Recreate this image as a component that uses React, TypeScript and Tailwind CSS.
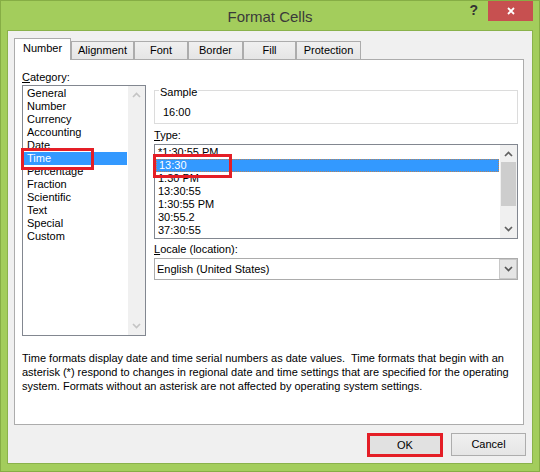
import clsx from "clsx";

const categories = [
  "General",
  "Number",
  "Currency",
  "Accounting",
  "Date",
  "Time",
  "Percentage",
  "Fraction",
  "Scientific",
  "Text",
  "Special",
  "Custom",
];

const types = ["*1:30:55 PM", "13:30", "1:30 PM", "13:30:55", "1:30:55 PM", "30:55.2", "37:30:55"];

const tabs = [
  { name: "Number", w: "w-[57px]", active: true },
  { name: "Alignment", w: "w-[63px]" },
  { name: "Font", w: "w-[54px]" },
  { name: "Border", w: "w-[55px]" },
  { name: "Fill", w: "w-[53px]" },
  { name: "Protection", w: "w-[65px]" },
];

const Chevron = ({ up, color }: { up?: boolean; color: string }) => (
  <svg width="9" height="6" viewBox="0 0 9 6">
    <polyline
      points={up ? "1,5 4.5,1.5 8,5" : "1,1 4.5,4.5 8,1"}
      fill="none"
      stroke={color}
      strokeWidth="1.7"
    />
  </svg>
);

export default function App() {
  return (
    <div className="relative w-[540px] h-[472px] border border-[#86ad45] bg-[#a3cd5c] flex flex-col px-[6px] font-['Liberation_Sans',Arial,sans-serif] text-[11px] leading-[13px] text-black">
      {/* title bar */}
      <div className="h-[29px] grid grid-cols-[1fr_auto_1fr]">
        <div />
        <div className="self-center pt-[1px] text-[15px] text-[#3a3a3a]">Format Cells</div>
        <div className="flex justify-end items-start">
          <span className="mt-[3px] mr-[10px] text-[14px] font-bold text-[#333]">?</span>
          <div className="w-[45px] h-[20px] bg-[#c75050] flex items-center justify-center">
            <svg width="8" height="8" viewBox="0 0 8 8">
              <path d="M1 1 L7 7 M7 1 L1 7" stroke="#fff" strokeWidth="1.8" />
            </svg>
          </div>
        </div>
      </div>

      {/* client */}
      <div className="h-[434px] border border-[#8ab24b] bg-[#f0f0f0] flex flex-col pl-[6px] pt-[7px]">
        <div className="h-[21px] flex items-end">
          {tabs.map((t) => (
            <div
              key={t.name}
              className={clsx(
                "border border-b-0 border-[#acacac] flex items-center justify-center",
                t.w,
                t.active
                  ? "h-[22px] -mb-px bg-white relative z-10 pb-[2px]"
                  : "h-[18px] bg-gradient-to-b from-[#f0f0f0] to-[#e5e5e5]"
              )}
            >
              {t.name}
            </div>
          ))}
        </div>

        <div className="w-[510px] h-[366px] border border-[#acacac] bg-white pl-[7px] pt-[11px]">
          <div className="grid grid-cols-[124px_364px] gap-x-[8px]">
            {/* category */}
            <div className="flex flex-col">
              <div className="h-[13px]">
                <span className="underline">C</span>ategory:
              </div>
              <div className="mt-[1px] h-[251px] border border-[#828790] flex">
                <div className="flex-1 px-[1px] pt-[1px]">
                  {categories.map((c) => (
                    <div
                      key={c}
                      className={clsx("h-[13px] pl-[3px]", c === "Time" && "bg-[#3399ff] text-white")}
                    >
                      {c}
                    </div>
                  ))}
                </div>
                <div className="w-[17px] bg-[#f0f0f0] flex flex-col items-center justify-between py-[6px]">
                  <Chevron up color="#c4c4c4" />
                  <Chevron color="#c4c4c4" />
                </div>
              </div>
            </div>

            {/* right side */}
            <div className="flex flex-col pt-[19px]">
              <div className="relative h-[34px] border border-[#dcdcdc]">
                <span className="absolute -top-[5px] left-[4px] bg-white px-[1px]">Sample</span>
                <div className="pt-[15px] pl-[8px]">16:00</div>
              </div>
              <div className="mt-[5px] h-[13px]">
                <span className="underline">T</span>ype:
              </div>
              <div className="mt-[2px] h-[95px] border border-[#828790] flex overflow-hidden">
                <div className="flex-1 px-[1px] pt-[1px]">
                  {types.map((t) => (
                    <div
                      key={t}
                      className={clsx(
                        "h-[13px] pl-[2px]",
                        t === "13:30" && "bg-[#3399ff] text-white border border-dotted border-[#b5835a] pl-[1px] leading-[11px]"
                      )}
                    >
                      {t}
                    </div>
                  ))}
                </div>
                <div className="w-[17px] bg-[#f0f0f0] flex flex-col items-center pt-[6px]">
                  <Chevron up color="#606060" />
                  <div className="mt-[5px] w-[15px] h-[44px] bg-[#cdcdcd]" />
                  <div className="mt-auto mb-[6px]">
                    <Chevron color="#606060" />
                  </div>
                </div>
              </div>
              <div className="mt-[4px] h-[13px]">
                <span className="underline">L</span>ocale (location):
              </div>
              <div className="mt-[2px] h-[22px] border border-[#acacac] flex items-stretch">
                <div className="flex-1 pl-[2px] flex items-center">English (United States)</div>
                <div className="w-[18px] bg-[#e5e5e5] border border-[#c8c8c8] flex items-center justify-center">
                  <Chevron color="#555" />
                </div>
              </div>
            </div>
          </div>

          <div className="mt-[15px] leading-[14px] whitespace-pre">
            {"Time formats display date and time serial numbers as date values.  Time formats that begin with an\n"}
            {"asterisk (*) respond to changes in regional date and time settings that are specified for the operating\n"}
            {"system. Formats without an asterisk are not affected by operating system settings."}
          </div>
        </div>

        <div className="mt-[8px] flex justify-end items-start gap-[8px] pr-[6px]">
          <button className="w-[76px] h-[24px] border-[3px] border-[#e41e26] bg-[#e1e1e1]">OK</button>
          <button className="w-[75px] h-[23px] border border-[#adadad] bg-gradient-to-b from-[#f0f0f0] to-[#e5e5e5]">
            Cancel
          </button>
        </div>
      </div>

      {/* annotation boxes */}
      <div className="absolute left-[20px] top-[147px] w-[73px] h-[22px] border-[3px] border-[#e41e26]" />
      <div className="absolute left-[152px] top-[153px] w-[79px] h-[24px] border-[3px] border-[#e41e26]" />
    </div>
  );
}
